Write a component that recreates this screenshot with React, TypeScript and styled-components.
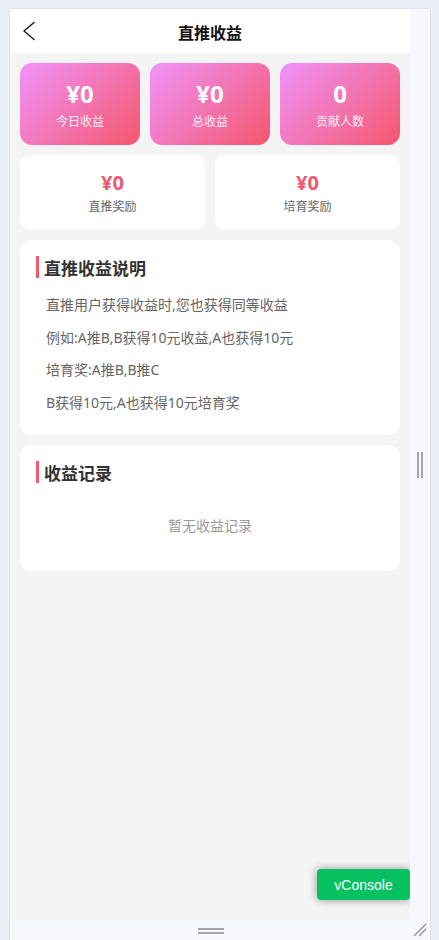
import * as React from 'react';
import styled, { createGlobalStyle } from 'styled-components';

const GlobalStyle = createGlobalStyle`
  html, body {
    margin: 0;
    padding: 0;
    background: #e9eef7;
    overflow: hidden;
  }
  body {
    font-family: 'Noto Sans', 'Noto Sans CJK SC', sans-serif;
  }
  * {
    box-sizing: border-box;
  }
`;

const Shell = styled.div`
  display: grid;
  grid-template-columns: 400px 20px;
  grid-template-rows: 911px 20px;
  width: 420px;
  margin: 9px 0 0 10px;
  background: #f6f8fd;
  box-shadow: 0 0 0 1px #dfe4ec;
`;

const Phone = styled.div`
  position: relative;
  display: flex;
  flex-flow: column;
  background: #f4f4f4;
  overflow: hidden;
`;

const SideHandle = styled.div`
  display: flex;
  align-items: center;
  justify-content: center;
  gap: 2px;
  padding-right: 1px;
`;

const VBar = styled.span`
  display: block;
  width: 2px;
  height: 26px;
  background: #a6a6a6;
`;

const BottomStrip = styled.div`
  grid-column: 1 / span 2;
  position: relative;
  display: flex;
  align-items: center;
  justify-content: center;
`;

const HBars = styled.div`
  display: flex;
  flex-flow: column;
  gap: 2px;
  margin-left: -18px;
  margin-top: 1px;
`;

const HBar = styled.span`
  display: block;
  width: 26px;
  height: 2px;
  background: #a6a6a6;
`;

const Grip = styled.svg`
  position: absolute;
  right: 3px;
  bottom: 3px;
`;

const Header = styled.div`
  position: relative;
  display: flex;
  align-items: center;
  justify-content: center;
  flex-shrink: 0;
  height: 44px;
  background: #fff;
`;

const BackButton = styled.svg`
  position: absolute;
  left: 12px;
  top: 12px;
`;

const Title = styled.div`
  font-size: 16px;
  font-weight: 700;
  color: #111;
  margin-top: 1px;
`;

const Content = styled.div`
  display: flex;
  flex-flow: column;
  gap: 10px;
  padding: 10px;
`;

const StatRow = styled.div`
  display: grid;
  grid-template-columns: repeat(${({ cols }: { cols: number }) => cols}, 1fr);
  gap: 10px;
`;

const GradientCard = styled.div`
  display: flex;
  flex-flow: column;
  align-items: center;
  height: 82px;
  padding-top: 16px;
  border-radius: 12px;
  background: linear-gradient(135deg, #f093fb 0%, #f5576c 100%);
  color: #fff;
`;

const BigValue = styled.div`
  font-size: 24px;
  font-weight: 700;
  line-height: 30px;
`;

const GradientLabel = styled.div`
  margin-top: 4px;
  font-size: 12px;
  line-height: 17px;
  opacity: 0.9;
`;

const WhiteCard = styled.div`
  display: flex;
  flex-flow: column;
  align-items: center;
  height: 75px;
  padding-top: 15px;
  border-radius: 10px;
  background: #fff;
`;

const RedValue = styled.div`
  font-size: 20px;
  font-weight: 700;
  line-height: 26px;
  color: #f5576c;
`;

const GrayLabel = styled.div`
  margin-top: 2px;
  font-size: 12px;
  line-height: 17px;
  color: #666;
`;

const Section = styled.div`
  padding: 16px;
  border-radius: 12px;
  background: #fff;
`;

const SectionTitle = styled.div`
  display: flex;
  align-items: center;
  height: 22px;
  padding-left: 5px;
  border-left: 3px solid #f5576c;
  font-size: 17px;
  font-weight: 700;
  color: #333;
  margin-bottom: 11px;
`;

const Line = styled.p`
  margin: 0;
  padding-left: 10px;
  font-size: 14px;
  line-height: 32.5px;
  color: #666;
`;

const Empty = styled.div`
  padding: 22px 0 19px;
  text-align: center;
  font-size: 14px;
  line-height: 20px;
  color: #999;
`;

const VConsole = styled.div`
  position: absolute;
  right: 0;
  bottom: 20px;
  width: 93px;
  height: 31px;
  display: flex;
  align-items: center;
  justify-content: center;
  border-radius: 4px;
  background: #07c160;
  color: #fff;
  font-family: 'Liberation Sans', Arial, sans-serif;
  font-size: 14px;
  box-shadow: 0 0 8px rgba(0, 0, 0, 0.4);
`;

const topStats = [
  { value: '¥0', label: '今日收益' },
  { value: '¥0', label: '总收益' },
  { value: '0', label: '贡献人数' },
];

const rewardStats = [
  { value: '¥0', label: '直推奖励' },
  { value: '¥0', label: '培育奖励' },
];

const rules = [
  '直推用户获得收益时,您也获得同等收益',
  '例如:A推B,B获得10元收益,A也获得10元',
  '培育奖:A推B,B推C',
  'B获得10元,A也获得10元培育奖',
];

export default function App() {
  return (
    <>
      <GlobalStyle />
      <Shell>
        <Phone>
          <Header>
            <BackButton width="14" height="20" viewBox="0 0 14 20">
              <path
                d="M12 1.5 L2 10 L12 18.5"
                fill="none"
                stroke="#222"
                strokeWidth="1.6"
                strokeLinecap="round"
                strokeLinejoin="round"
              />
            </BackButton>
            <Title>直推收益</Title>
          </Header>
          <Content>
            <StatRow cols={3}>
              {topStats.map(s => (
                <GradientCard key={s.label}>
                  <BigValue>{s.value}</BigValue>
                  <GradientLabel>{s.label}</GradientLabel>
                </GradientCard>
              ))}
            </StatRow>
            <StatRow cols={2}>
              {rewardStats.map(s => (
                <WhiteCard key={s.label}>
                  <RedValue>{s.value}</RedValue>
                  <GrayLabel>{s.label}</GrayLabel>
                </WhiteCard>
              ))}
            </StatRow>
            <Section>
              <SectionTitle>直推收益说明</SectionTitle>
              {rules.map(r => (
                <Line key={r}>{r}</Line>
              ))}
            </Section>
            <Section>
              <SectionTitle>收益记录</SectionTitle>
              <Empty>暂无收益记录</Empty>
            </Section>
          </Content>
          <VConsole>vConsole</VConsole>
        </Phone>
        <SideHandle>
          <VBar />
          <VBar />
        </SideHandle>
        <BottomStrip>
          <HBars>
            <HBar />
            <HBar />
          </HBars>
          <Grip width="14" height="14" viewBox="0 0 14 14">
            <path d="M1 13 L13 1 M6 13 L13 6" stroke="#999" strokeWidth="1.5" />
          </Grip>
        </BottomStrip>
      </Shell>
    </>
  );
}
